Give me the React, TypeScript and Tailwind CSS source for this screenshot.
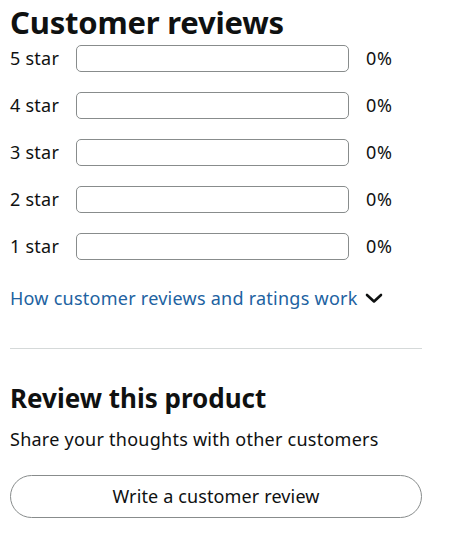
import React from "react";

const rows = ["5 star", "4 star", "3 star", "2 star", "1 star"];

export default function App() {
  return (
    <div className="w-[462px] h-[534px] bg-white pl-[10px] pr-[40px] text-[#0f1111]" style={{ fontFamily: '"Noto Sans", Arial, sans-serif' }}>
      <h2 className="text-[31px] font-bold leading-[45px] tracking-[-0.2px]">Customer reviews</h2>
      <div className="flex flex-col gap-[20px]">
        {rows.map((r) => (
          <div key={r} className="flex items-center h-[27px]">
            <span className="w-[66px] text-[18px] leading-[27px] tracking-[0.25px]">{r}</span>
            <div className="w-[273px] h-[27px] rounded-[5px] border border-[#888c8c] bg-white"></div>
            <span className="ml-[17px] text-[18px] leading-[27px] tracking-[0.8px]">0%</span>
          </div>
        ))}
      </div>
      <div className="mt-[26px] flex items-center h-[24px]">
        <span className="text-[18px] leading-[24px] tracking-[0.25px] text-[#2162a1]">How customer reviews and ratings work</span>
        <svg className="ml-[7px]" width="18" height="11" viewBox="0 0 18 11" fill="none">
          <path d="M2 2 L9 8.5 L16 2" stroke="#0f1111" strokeWidth="2.6" strokeLinecap="round" strokeLinejoin="round" />
        </svg>
      </div>
      <div className="mt-[38px] w-[412px] h-px bg-[#d5d9d9]"></div>
      <h3 className="mt-[33px] text-[26px] font-bold leading-[32px]">Review this product</h3>
      <p className="mt-[12px] text-[18px] leading-[26px] tracking-[0.25px]">Share your thoughts with other customers</p>
      <button className="mt-[23px] w-[412px] h-[43px] rounded-full border border-[#888c8c] bg-white text-[18px] tracking-[0.13px] text-[#0f1111]">Write a customer review</button>
    </div>
  );
}
